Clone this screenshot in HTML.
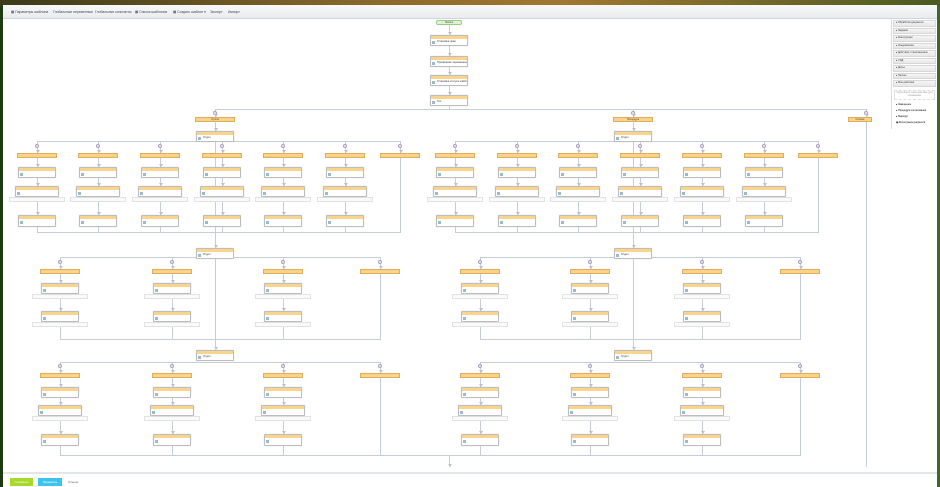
<!DOCTYPE html><html><head><meta charset="utf-8"><style>
*{box-sizing:border-box;margin:0;padding:0}
body{width:940px;height:487px;overflow:hidden;background:linear-gradient(90deg,#1d3a12,#2c4a1a 50%,#3d6a22);font-family:"Liberation Sans",sans-serif;position:relative}
#top{position:absolute;left:0;top:0;width:940px;height:6px;background:linear-gradient(90deg,#3a3a1a,#8a6a2a 40%,#a07830 60%,#4a5a20)}
#main{position:absolute;left:3px;top:5px;width:934px;height:482px;background:#fff}
#tb{position:absolute;left:3px;top:5px;width:934px;height:14px;background:linear-gradient(#f8f8f8,#e9ecef);border-bottom:1px solid #cfd5dc;font-size:3.4px;color:#445;white-space:nowrap}
#tb span{position:absolute;top:5px}
.n{position:absolute;width:38px;height:11px;background:#fff;border:1px solid #bdbdbd;border-radius:1px;box-shadow:0 0 1px #ccc;font-size:2.6px;color:#333;padding:4px 0 0 6px;white-space:nowrap;overflow:hidden}
.n::before{content:"";position:absolute;left:0;top:0;right:0;height:3px;background:#fbd48b}
.n::after{content:"";position:absolute;left:1px;top:5px;width:3px;height:3px;background:#9bc}
.b{width:44px}
.band{position:absolute;width:56px;height:5px;border:1px solid #e2e2e2;background:#fafafa;font-size:2px;color:#999;text-align:center}
.h{position:absolute;width:40px;height:5px;background:#fbd28a;border:1px solid #e0ad5c;font-size:2.4px;color:#543;text-align:center;line-height:3px;white-space:nowrap;overflow:hidden}
.l{position:absolute;background:#c5cdd8}
.a{position:absolute;width:0;height:0;border-left:2px solid transparent;border-right:2px solid transparent;border-top:3px solid #b8c0cc}
.c{position:absolute;width:4px;height:4px;border:1px solid #a9a0c0;border-radius:50%;background:#f3eef8}
#rp{position:absolute;left:891px;top:19px;width:46px;height:110px;background:#fff;border-left:1px solid #ddd}
#rp div{height:6.5px;margin:1px 1px;background:linear-gradient(#f6f6f6,#e6e6e6);border:1px solid #d8d8d8;font-size:2.5px;color:#333;padding-left:2px}
#bb{position:absolute;left:3px;top:472px;width:934px;height:15px;background:#fff;border-top:2px solid #e4e7ea}
.btn{position:absolute;top:4px;height:8px;font-size:2.8px;color:#fff;text-align:center;line-height:8px}
</style></head><body>
<div id="top"></div><div id="main"></div>
<div id="tb"><span style="left:8px">▦ Параметры шаблона</span><span style="left:50px">Глобальные переменные</span><span style="left:92px">Глобальные константы</span><span style="left:132px">▦ Список шаблонов</span><span style="left:170px">▦ Создать шаблон ▾</span><span style="left:207px">Экспорт</span><span style="left:225px">Импорт</span></div>
<div id="lines"></div>
<div class="h" style="left:436px;top:20px;width:26px;background:#dff3d0;border-color:#9c8;border-radius:2px">Начало</div>
<div class="n" style="left:430px;top:35px">Установка прав</div>
<div class="n" style="left:430px;top:56px">Присвоение переменных</div>
<div class="n" style="left:430px;top:75px">Установка статуса шаблона</div>
<div class="n" style="left:430px;top:95px">Тип</div>
<div class="h" style="left:195px;top:117px">Группа</div>
<div class="h" style="left:613px;top:117px">Процедура</div>
<div class="h" style="left:848px;top:117px;width:24px">Условие</div>
<div class="n" style="left:196px;top:131px">Отдел</div>
<div class="n" style="left:614px;top:131px">Отдел</div>
<div class="n" style="left:196px;top:248px">Отдел</div>
<div class="n" style="left:614px;top:248px">Отдел</div>
<div class="n" style="left:196px;top:350px">Отдел</div>
<div class="n" style="left:614px;top:350px">Отдел</div>
<div id="nodes"></div>
<div id="rp"><div>▸ Обработка документа</div><div>▸ Задания</div><div>▸ Конструкции</div><div>▸ Уведомления</div><div>▸ Действия с приложением</div><div>▸ СЭД</div><div>▸ Досье</div><div>▸ Прочее</div><div>▸ Мои действия</div>
<p style="font-size:2.4px;color:#999;text-align:center;margin:3px 2px;border:1px dashed #ddd;height:10px">Перетащите сюда действие для сохранения</p>
<p style="font-size:2.4px;margin:3px 4px">● Замещение</p><p style="font-size:2.4px;margin:3px 4px">● Процедура согласования</p><p style="font-size:2.4px;margin:3px 4px">● Маршрут</p><p style="font-size:2.4px;margin:3px 4px">▣ Регистрация документа</p></div>
<div id="bb"><div class="btn" style="left:7px;width:23px;background:#a8d82a">Сохранить</div><div class="btn" style="left:35px;width:24px;background:#3cc4ee">Применить</div><div class="btn" style="left:63px;width:14px;color:#666">Отмена</div></div>
<script>
var L=document.getElementById('lines'),N=document.getElementById('nodes');
function mk(c,x,y,w,h,p){var d=document.createElement('div');d.className=c;d.style.left=x+'px';d.style.top=y+'px';if(w)d.style.width=w+'px';if(h)d.style.height=h+'px';(p||N).appendChild(d);return d;}
function ln(x,y,w,h){mk('l',x,y,w,h,L)}
function v(x,a,b){ln(x,a,1,b-a)}function hz(y,a,b){ln(a,y,b-a,1)}
function ar(x,y){mk('a',x-1.5,y-3,0,0,L)}
function ci(x,y){mk('c',x-2,y,0,0,L)}
function el(c,x,y,w){return mk(c,x,y,w)}
v(449,25,109);[35,56,75,95].forEach(function(y){ar(449,y)});hz(109,215,867);v(215,109,131);v(633,109,131);v(866,109,467);
ci(215,111);ci(633,111);ci(866,111);ar(215,117);ar(633,117);ar(866,117);ar(215,131);ar(633,131);
var g2=[[37,98,160,222,283,345,400],[455,517,578,640,702,764,818]];
var g3=[[60,172,283,380],[480,590,702,800]];
[215,633].forEach(function(c,i){
 var a=g2[i];hz(141,a[0],a[6]+1);v(c,141,248);hz(232,a[0],a[6]+1);ar(c,248);
 a.forEach(function(x,k){v(x,141,232);ci(x,144);ar(x,153);el('h',x-20,153);if(k<6){ar(x,167);ar(x,186);ar(x,215);el('n',x-19,167);el('band',x-28,197);el('n b',x-22,186);el('n',x-19,215).style.height='12px';}});
 var b=g3[i];hz(257,b[0],b[3]+1);v(c,258,350);hz(339,b[0],b[3]+1);ar(c,350);
 b.forEach(function(x,k){v(x,257,339);ci(x,260);ar(x,269);el('h',x-20,269);if(k<3){ar(x,283);ar(x,311);el('band',x-28,294);el('n',x-19,283);el('band',x-28,322);el('n',x-19,311);}});
 hz(362,b[0],b[3]+1);v(c,339,350);hz(455,b[0],b[3]+1);
 b.forEach(function(x,k){v(x,362,455);ci(x,364);ar(x,373);el('h',x-20,373);if(k<3){ar(x,387);ar(x,405);ar(x,434);el('n',x-19,387);el('band',x-28,416);el('n b',x-22,405);el('n',x-19,434).style.height='12px';}});
});
hz(455,215,634);v(449,455,467);ar(449,467);
</script>
</body></html>
